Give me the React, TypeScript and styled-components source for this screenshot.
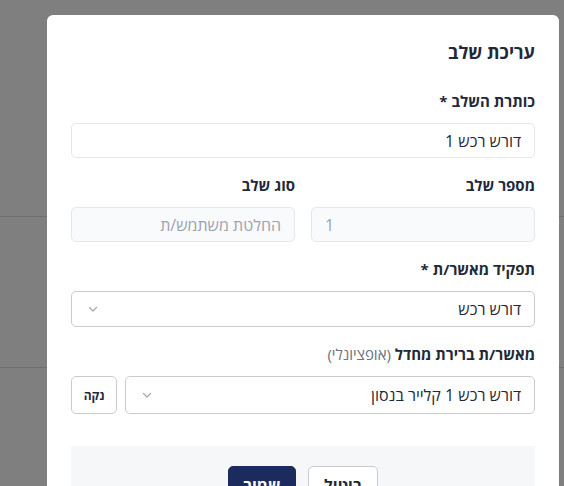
import React from "react";
import styled, { createGlobalStyle } from "styled-components";

const Global = createGlobalStyle`
  html, body { margin: 0; padding: 0; }
  body {
    width: 564px; height: 486px; overflow: hidden;
    font-family: "Open Sans", "Liberation Sans", "DejaVu Sans", sans-serif;
    background: #ffffff;
  }
  * { box-sizing: border-box; }
`;

const Page = styled.div`
  position: relative;
  width: 564px;
  height: 486px;
  overflow: hidden;
  background: #ffffff;
`;

const BackLines = styled.div`
  display: flex;
  flex-direction: column;
  padding-top: 216px;
`;

const BackRow = styled.div<{ $h: number }>`
  height: ${(p) => p.$h}px;
  border-top: 1px solid #dcdcdc;
`;

const Overlay = styled.div`
  position: absolute;
  inset: 0;
  background: rgba(0, 0, 0, 0.5);
  display: flex;
  justify-content: flex-end;
  padding: 15px 5px 0 0;
`;

const Modal = styled.div`
  direction: rtl;
  width: 512px;
  background: #ffffff;
  border-radius: 6px 6px 0 0;
  padding: 23px 24px 0 24px;
  display: flex;
  flex-direction: column;
  align-self: flex-start;
  color: #1f2937;
`;

const Title = styled.h2`
  margin: 0 0 23px 0;
  font-size: 18px;
  line-height: 28px;
  font-weight: 700;
  color: #1f2937;
`;

const Field = styled.div`
  display: flex;
  flex-direction: column;
  margin-bottom: 15px;
  min-width: 0;
`;

const Label = styled.label`
  font-size: 15px;
  line-height: 24px;
  font-weight: 700;
  color: #1f2937;
  margin-bottom: 10px;
`;

const Optional = styled.span`
  font-weight: 400;
  color: #6b7280;
`;

const Input = styled.div<{ $disabled?: boolean; $ltr?: boolean }>`
  height: 35px;
  border: 1px solid #e5e7eb;
  border-radius: 5px;
  background: ${(p) => (p.$disabled ? "#f9fafb" : "#ffffff")};
  color: ${(p) => (p.$disabled ? "#9ca3af" : "#1f2937")};
  font-size: 16px;
  display: flex;
  align-items: center;
  padding: 0 13px;
  direction: ${(p) => (p.$ltr ? "ltr" : "rtl")};
`;

const Row = styled.div`
  display: grid;
  grid-template-columns: 1fr 1fr;
  gap: 16px;
`;

const Select = styled.div<{ $tall?: boolean }>`
  flex: 1 1 auto;
  min-width: 0;
  height: ${(p) => (p.$tall ? 38 : 36)}px;
  border: 1px solid #c8ccd2;
  border-radius: 5px;
  background: #ffffff;
  color: #1f2937;
  font-size: 16px;
  display: flex;
  align-items: center;
  justify-content: space-between;
  padding: 0 13px 0 15px;
`;

const Chevron = () => (
  <svg width="12" height="12" viewBox="0 0 12 12" fill="none">
    <path d="M2.5 4.5L6 8L9.5 4.5" stroke="#a3a8b0" strokeWidth="1.2" strokeLinecap="round" strokeLinejoin="round" />
  </svg>
);

const SelectRow = styled.div`
  display: flex;
  gap: 8px;
  align-items: stretch;
`;

const ClearButton = styled.button`
  flex: 0 0 46px;
  height: 38px;
  border: 1px solid #c8ccd2;
  border-radius: 5px;
  background: #ffffff;
  font-family: inherit;
  font-size: 12px;
  font-weight: 700;
  color: #1f2937;
  padding: 0;
`;

const Footer = styled.div`
  margin-top: 17px;
  background: #f6f7f9;
  height: 60px;
  display: flex;
  justify-content: center;
  align-items: flex-start;
  gap: 12px;
  padding-top: 20px;
`;

const Button = styled.button<{ $primary?: boolean }>`
  width: ${(p) => (p.$primary ? 68 : 70)}px;
  height: 38px;
  border-radius: 5px;
  font-family: inherit;
  font-size: 16px;
  font-weight: 700;
  border: 1px solid ${(p) => (p.$primary ? "#1c2b5e" : "#c8ccd2")};
  background: ${(p) => (p.$primary ? "#1c2b5e" : "#ffffff")};
  color: ${(p) => (p.$primary ? "#ffffff" : "#1f2937")};
  padding: 0;
`;

export default function App() {
  return (
    <>
      <Global />
      <Page>
        <BackLines>
          <BackRow $h={151} />
          <BackRow $h={100} />
        </BackLines>
        <Overlay>
          <Modal>
            <Title>עריכת שלב</Title>
            <Field>
              <Label>כותרת השלב *</Label>
              <Input>דורש רכש 1</Input>
            </Field>
            <Row>
              <Field>
                <Label>מספר שלב</Label>
                <Input $disabled $ltr>1</Input>
              </Field>
              <Field>
                <Label>סוג שלב</Label>
                <Input $disabled>החלטת משתמש/ת</Input>
              </Field>
            </Row>
            <Field>
              <Label>תפקיד מאשר/ת *</Label>
              <Select>
                <span>דורש רכש</span>
                <Chevron />
              </Select>
            </Field>
            <Field>
              <Label>
                מאשר/ת ברירת מחדל <Optional>(אופציונלי)</Optional>
              </Label>
              <SelectRow>
                <Select $tall>
                  <span>דורש רכש 1 קלייר בנסון</span>
                  <Chevron />
                </Select>
                <ClearButton>נקה</ClearButton>
              </SelectRow>
            </Field>
            <Footer>
              <Button>ביטול</Button>
              <Button $primary>שמור</Button>
            </Footer>
          </Modal>
        </Overlay>
      </Page>
    </>
  );
}
